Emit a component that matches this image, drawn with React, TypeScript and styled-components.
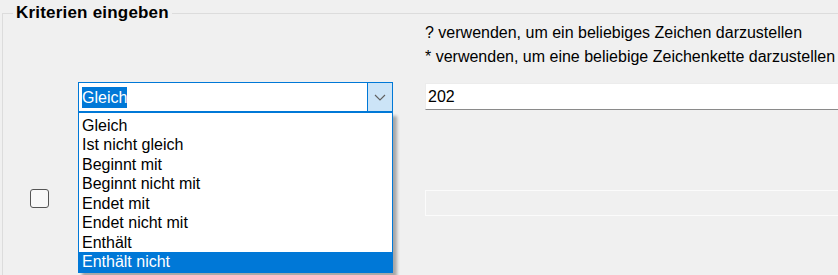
import React from 'react'
import styled, { createGlobalStyle } from 'styled-components'

const operators = [
  'Gleich',
  'Ist nicht gleich',
  'Beginnt mit',
  'Beginnt nicht mit',
  'Endet mit',
  'Endet nicht mit',
  'Enthält',
  'Enthält nicht',
]

const GlobalStyle = createGlobalStyle`
  html, body {
    margin: 0;
    padding: 0;
    background: #f0f0f0;
    overflow: hidden;
  }
  body {
    font-family: "Liberation Sans", Arial, sans-serif;
    font-size: 16px;
    color: #000;
  }
`

// group box runs past the bottom edge of the window, like the original form
const Group = styled.fieldset`
  margin: 3px 0 0 2px;
  padding: 0;
  min-width: 0;
  height: 300px;
  border: 1px solid #dcdcdc;
  border-right: none;
  border-bottom: none;
`

const Legend = styled.legend`
  margin-left: 10px;
  padding: 0 3px;
  font-size: 17px;
  font-weight: bold;
  line-height: 20px;
  letter-spacing: 0.2px;
  color: #000;
`

const Form = styled.div`
  display: grid;
  grid-template-columns: 48px 347px 1fr;
  grid-template-rows: 59px 106px 30px;
  padding-left: 27px;
`

const Hints = styled.div`
  grid-column: 3;
  grid-row: 1;
  display: flex;
  flex-direction: column;
  gap: 4px;
  line-height: 20px;
  white-space: nowrap;
`

const ComboWrap = styled.div`
  grid-column: 2;
  grid-row: 2;
  position: relative;
  width: 315px;
  height: 30px;
`

const ComboField = styled.div`
  display: flex;
  height: 100%;
  box-sizing: border-box;
  border: 1px solid #0078d7;
  background: #fff;
`

const ComboText = styled.div`
  flex: 1;
  display: flex;
  align-items: center;
  padding-left: 3px;
`

const Selected = styled.span`
  background: #0078d7;
  color: #fff;
  line-height: 21px;
`

const ComboButton = styled.div`
  width: 24px;
  display: flex;
  align-items: center;
  justify-content: center;
  background: #cce4f7;
  border-left: 1px solid #0078d7;
`

const DropList = styled.div`
  position: absolute;
  top: 100%;
  left: 0;
  right: 0;
  z-index: 2;
  padding-top: 2.5px;
  background: #fff;
  border: 1px solid #0078d7;
  box-shadow: 4px 4px 3px rgba(0, 0, 0, 0.3);
`

const Item = styled.div<{ $active?: boolean }>`
  height: 19.5px;
  line-height: 19.5px;
  padding-left: 3px;
  white-space: nowrap;
  background: ${(p) => (p.$active ? '#0078d7' : 'transparent')};
  color: ${(p) => (p.$active ? '#fff' : '#000')};
`

const TextBox = styled.div<{ $disabled?: boolean }>`
  grid-column: 3;
  align-self: start;
  margin-top: ${(p) => (p.$disabled ? '2px' : '1px')};
  height: ${(p) => (p.$disabled ? '26px' : '27px')};
  box-sizing: border-box;
  display: flex;
  align-items: center;
  padding-left: 2px;
  background: ${(p) => (p.$disabled ? '#f0f0f0' : '#fff')};
  border: 1px solid ${(p) => (p.$disabled ? '#fbfbfb' : '#ececec')};
  border-bottom-color: ${(p) => (p.$disabled ? '#fbfbfb' : '#8a8a8a')};
  border-right: none;
`

const CheckBox = styled.div`
  grid-column: 1;
  grid-row: 3;
  align-self: start;
  margin: 1px 0 0 0;
  width: 19px;
  height: 19px;
  box-sizing: border-box;
  border: 1px solid #555;
  border-radius: 3px;
  background: #f8f8f8;
`

const Chevron = () => (
  <svg width="12" height="7" viewBox="0 0 12 7">
    <path d="M1 1 L6 6 L11 1" fill="none" stroke="#606060" strokeWidth="1.1" />
  </svg>
)

export default function App() {
  return (
    <>
      <GlobalStyle />
      <Group>
        <Legend>Kriterien eingeben</Legend>
        <Form>
          <Hints>
            <span>? verwenden, um ein beliebiges Zeichen darzustellen</span>
            <span>* verwenden, um eine beliebige Zeichenkette darzustellen</span>
          </Hints>
          <ComboWrap>
            <ComboField>
              <ComboText>
                <Selected>Gleich</Selected>
              </ComboText>
              <ComboButton>
                <Chevron />
              </ComboButton>
            </ComboField>
            <DropList>
              {operators.map((op, i) => (
                <Item key={op} $active={i === operators.length - 1}>
                  {op}
                </Item>
              ))}
            </DropList>
          </ComboWrap>
          <TextBox style={{ gridRow: 2 }}>202</TextBox>
          <CheckBox />
          <TextBox $disabled style={{ gridRow: 3 }} />
        </Form>
      </Group>
    </>
  )
}
